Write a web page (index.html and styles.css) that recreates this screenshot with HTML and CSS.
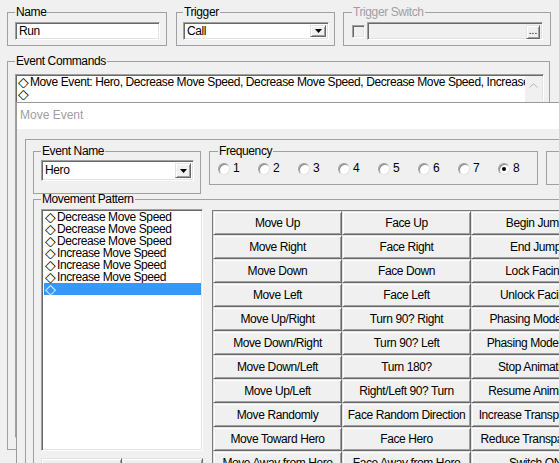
FILE: index.html
```html
<!DOCTYPE html>
<html>
<head>
<meta charset="utf-8">
<link rel="stylesheet" href="styles.css">
</head>
<body>
<div class="form">
  <div class="top-row">
    <fieldset class="group g-name">
      <legend>Name</legend>
      <div class="edit">Run</div>
    </fieldset>
    <fieldset class="group g-trigger">
      <legend>Trigger</legend>
      <div class="combo combo-sm">
        <span class="combo-text">Call</span>
        <span class="drop-btn"><svg width="7" height="4" viewBox="0 0 7 4"><polygon points="0,0 7,0 3.5,4" fill="#000"/></svg></span>
      </div>
    </fieldset>
    <fieldset class="group g-switch">
      <legend class="disabled">Trigger Switch</legend>
      <div class="switch-row">
        <span class="check"></span>
        <div class="edit edit-disabled">
          <span class="dots-btn">...</span>
        </div>
      </div>
    </fieldset>
  </div>
  <fieldset class="group g-commands">
    <legend>Event Commands</legend>
    <div class="listbox cmd-list">
      <div class="list-items">
        <div class="item"><span class="dia">◇</span>Move Event: Hero, Decrease Move Speed, Decrease Move Speed, Decrease Move Speed, Increase Move Speed, Increase Move Speed, Increase Move Speed</div>
        <div class="item"><span class="dia">◇</span></div>
      </div>
      <div class="vscroll"><svg width="9" height="5" viewBox="0 0 9 5"><polyline points="0.5,4.5 4.5,0.8 8.5,4.5" fill="none" stroke="#b4b4b4" stroke-width="1"/></svg></div>
    </div>
  </fieldset>
</div>

<div class="window">
  <div class="titlebar">Move Event</div>
  <div class="win-body">
    <div class="panel">
      <div class="row1">
        <fieldset class="group g-evname">
          <legend>Event Name</legend>
          <div class="combo combo-lg">
            <span class="combo-text">Hero</span>
            <span class="drop-btn"><svg width="7" height="4" viewBox="0 0 7 4"><polygon points="0,0 7,0 3.5,4" fill="#000"/></svg></span>
          </div>
        </fieldset>
        <fieldset class="group g-freq">
          <legend>Frequency</legend>
          <div class="radios">
            <span class="radio"><span class="circ"></span>1</span>
            <span class="radio"><span class="circ"></span>2</span>
            <span class="radio"><span class="circ"></span>3</span>
            <span class="radio"><span class="circ"></span>4</span>
            <span class="radio"><span class="circ"></span>5</span>
            <span class="radio"><span class="circ"></span>6</span>
            <span class="radio"><span class="circ"></span>7</span>
            <span class="radio on"><span class="circ"></span>8</span>
          </div>
        </fieldset>
        <fieldset class="group g-extra"></fieldset>
      </div>
      <fieldset class="group g-pattern">
        <legend>Movement Pattern</legend>
        <div class="pattern-body">
          <div class="left-col">
            <div class="listbox pat-list">
              <div class="item"><span class="dia">◇</span>Decrease Move Speed</div>
              <div class="item"><span class="dia">◇</span>Decrease Move Speed</div>
              <div class="item"><span class="dia">◇</span>Decrease Move Speed</div>
              <div class="item"><span class="dia">◇</span>Increase Move Speed</div>
              <div class="item"><span class="dia">◇</span>Increase Move Speed</div>
              <div class="item"><span class="dia">◇</span>Increase Move Speed</div>
              <div class="item selected"><span class="dia">◇</span></div>
            </div>
            <div class="list-btns"><span class="btn"></span><span class="btn"></span></div>
          </div>
          <div class="cmd-grid">
            <div class="cmd">Move Up</div><div class="cmd">Face Up</div><div class="cmd">Begin Jump</div>
            <div class="cmd">Move Right</div><div class="cmd">Face Right</div><div class="cmd">End Jump</div>
            <div class="cmd">Move Down</div><div class="cmd">Face Down</div><div class="cmd">Lock Facing</div>
            <div class="cmd">Move Left</div><div class="cmd">Face Left</div><div class="cmd">Unlock Facing</div>
            <div class="cmd">Move Up/Right</div><div class="cmd">Turn 90? Right</div><div class="cmd">Phasing Mode ON</div>
            <div class="cmd">Move Down/Right</div><div class="cmd">Turn 90? Left</div><div class="cmd">Phasing Mode OFF</div>
            <div class="cmd">Move Down/Left</div><div class="cmd">Turn 180?</div><div class="cmd">Stop Animation</div>
            <div class="cmd">Move Up/Left</div><div class="cmd">Right/Left 90? Turn</div><div class="cmd">Resume Animation</div>
            <div class="cmd">Move Randomly</div><div class="cmd">Face Random Direction</div><div class="cmd">Increase Transparency</div>
            <div class="cmd">Move Toward Hero</div><div class="cmd">Face Hero</div><div class="cmd">Reduce Transparency</div>
            <div class="cmd">Move Away from Hero</div><div class="cmd">Face Away from Hero</div><div class="cmd">Switch ON</div>
          </div>
        </div>
      </fieldset>
    </div>
  </div>
</div>
</body>
</html>
```

FILE: styles.css
```css
html, body {
  margin: 0;
  padding: 0;
  overflow: hidden;
}
body {
  width: 559px;
  height: 463px;
  position: relative;
  background: #f0f0f0;
  color: #000;
  font-family: "Liberation Sans", "Noto Sans CJK JP", Arial, sans-serif;
  font-size: 12px;
  line-height: 13px;
  letter-spacing: -0.4px;
}

/* ---------- generic controls ---------- */
.group {
  margin: 0;
  min-width: 0;
  flex-shrink: 0;
  border: 1px solid #a0a0a0;
  box-sizing: border-box;
}
.group > legend {
  padding: 0 1px;
  line-height: 13px;
}
.group > legend.disabled {
  color: #a0a0a0;
}
.edit, .combo, .listbox {
  box-sizing: border-box;
  background: #fff;
  border: 1px solid;
  border-color: #a0a0a0 #ffffff #ffffff #a0a0a0;
  box-shadow: inset 1px 1px 0 #696969, inset -1px -1px 0 #e3e3e3;
}
.edit {
  height: 18px;
  padding: 2px 3px;
  line-height: 13px;
  white-space: nowrap;
}
.edit-disabled {
  background: #f0f0f0;
}
.combo {
  display: flex;
  align-items: stretch;
  padding: 2px;
}
.combo-sm { height: 18px; }
.combo-lg { height: 21px; }
.combo-text {
  flex: 1;
  padding-left: 1px;
  line-height: 13px;
  display: flex;
  align-items: center;
}
.drop-btn, .dots-btn, .btn, .cmd {
  box-sizing: border-box;
  background: #f0f0f0;
  border: 1px solid;
  border-color: #e3e3e3 #696969 #696969 #e3e3e3;
  box-shadow: inset 1px 1px 0 #ffffff, inset -1px -1px 0 #a0a0a0;
}
.drop-btn {
  width: 16px;
  display: flex;
  align-items: center;
  justify-content: center;
}
.dia {
  font-family: "DejaVu Sans", sans-serif;
  font-size: 14px;
  display: inline-block;
  width: 12px;
  letter-spacing: 0;
  line-height: 12px;
  vertical-align: top;
  text-align: left;
  overflow: visible;
}

/* ---------- main form ---------- */
.form {
  padding: 6px 0 0 7px;
}
.top-row {
  display: flex;
  align-items: flex-start;
}
.g-name {
  width: 160px;
  padding: 3px 6px 5px 7px;
}
.g-trigger {
  width: 159px;
  margin-left: 9px;
  padding: 3px 5px 5px 6px;
}
.g-switch {
  width: 208px;
  margin-left: 8px;
  padding: 3px 7px 5px 8px;
}
.switch-row {
  display: flex;
  align-items: center;
  height: 18px;
}
.check {
  flex-shrink: 0;
  width: 13px;
  height: 13px;
  box-sizing: border-box;
  background: #f0f0f0;
  border: 1px solid;
  border-color: #a0a0a0 #ffffff #ffffff #a0a0a0;
  box-shadow: inset 1px 1px 0 #696969, inset -1px -1px 0 #e3e3e3;
  margin-right: 2px;
}
.switch-row .edit {
  flex: 1;
  display: flex;
  justify-content: flex-end;
  padding: 2px;
}
.dots-btn {
  width: 14px;
  height: 14px;
  font-size: 10px;
  line-height: 9px;
  letter-spacing: 0;
  text-align: center;
}

.g-commands {
  width: 543px;
  height: 395px;
  margin-top: 9px;
  padding: 6px 5px 11px 7px;
}
.cmd-list {
  display: flex;
  height: 364px;
  padding: 1px 1px 1px 2px;
}
.list-items {
  flex: 1;
  overflow: hidden;
  min-width: 0;
}
.item {
  height: 12px;
  line-height: 12px;
  white-space: nowrap;
  overflow: hidden;
}
.vscroll {
  flex-shrink: 0;
  width: 17px;
  background: #f0f0f0;
  display: flex;
  justify-content: center;
  padding-top: 7px;
  box-sizing: border-box;
}

/* ---------- Move Event window ---------- */
.window {
  position: absolute;
  left: 16px;
  top: 102px;
  width: 700px;
  height: 400px;
  border-left: 1px solid #9a9a9a;
  border-top: 1px solid #9a9a9a;
  background: #f0f0f0;
}
.titlebar {
  height: 26px;
  background: #ffffff;
  padding-left: 3px;
  line-height: 25px;
  color: #9d9da8;
  letter-spacing: 0;
}
.win-body {
  padding: 10px 0 0 8px;
}
.panel {
  border-top: 1px solid #a0a0a0;
  border-left: 1px solid #a0a0a0;
  padding: 5px 0 0 7px;
  height: 400px;
}
.row1 {
  display: flex;
  align-items: flex-start;
}
.g-evname {
  width: 168px;
  padding: 2px 6px 12px 7px;
}
.g-freq {
  width: 329px;
  margin-left: 8px;
  padding: 4px 8px 9px 8px;
}
.g-extra {
  width: 100px;
  height: 34px;
  margin-left: 8px;
  margin-top: 6px;
  padding: 0;
}
.radios {
  display: flex;
}
.radio {
  flex-shrink: 0;
  width: 40px;
  display: flex;
  align-items: center;
  height: 13px;
}
.circ {
  position: relative;
  flex-shrink: 0;
  width: 12px;
  height: 12px;
  box-sizing: border-box;
  border-radius: 50%;
  border: 1px solid;
  border-color: #a0a0a0 #e3e3e3 #e3e3e3 #a0a0a0;
  background: #fff;
  box-shadow: inset 1px 1px 0 #8a8a8a;
  margin-right: 3px;
}
.radio.on .circ::after {
  content: "";
  position: absolute;
  left: 3px;
  top: 3px;
  width: 4px;
  height: 4px;
  border-radius: 50%;
  background: #000;
}

.g-pattern {
  width: 640px;
  margin-top: -1px;
  padding: 3px 0 0 7px;
  border-right: none;
  border-bottom: none;
}
.pattern-body {
  display: flex;
  align-items: flex-start;
}
.left-col {
  flex-shrink: 0;
  width: 162px;
  display: flex;
  flex-direction: column;
  gap: 7px;
}
.pat-list {
  height: 242px;
  padding: 1px 1px 1px 3px;
}
.pat-list .item {
  margin-left: -1px;
  padding-left: 1px;
}
.pat-list .item.selected {
  background: #3399ff;
  color: #fff;
}
.list-btns {
  display: flex;
  height: 24px;
}
.list-btns .btn {
  flex: 1;
}
.cmd-grid {
  flex-shrink: 0;
  margin-left: 9px;
  margin-top: 1px;
  display: grid;
  grid-template-columns: 129px 129px 129px;
  grid-auto-rows: 24px;
  border-top: 1px solid #7a7a7a;
  border-left: 1px solid #7a7a7a;
}
.cmd {
  text-align: center;
  line-height: 22px;
  white-space: nowrap;
  overflow: hidden;
}
```
